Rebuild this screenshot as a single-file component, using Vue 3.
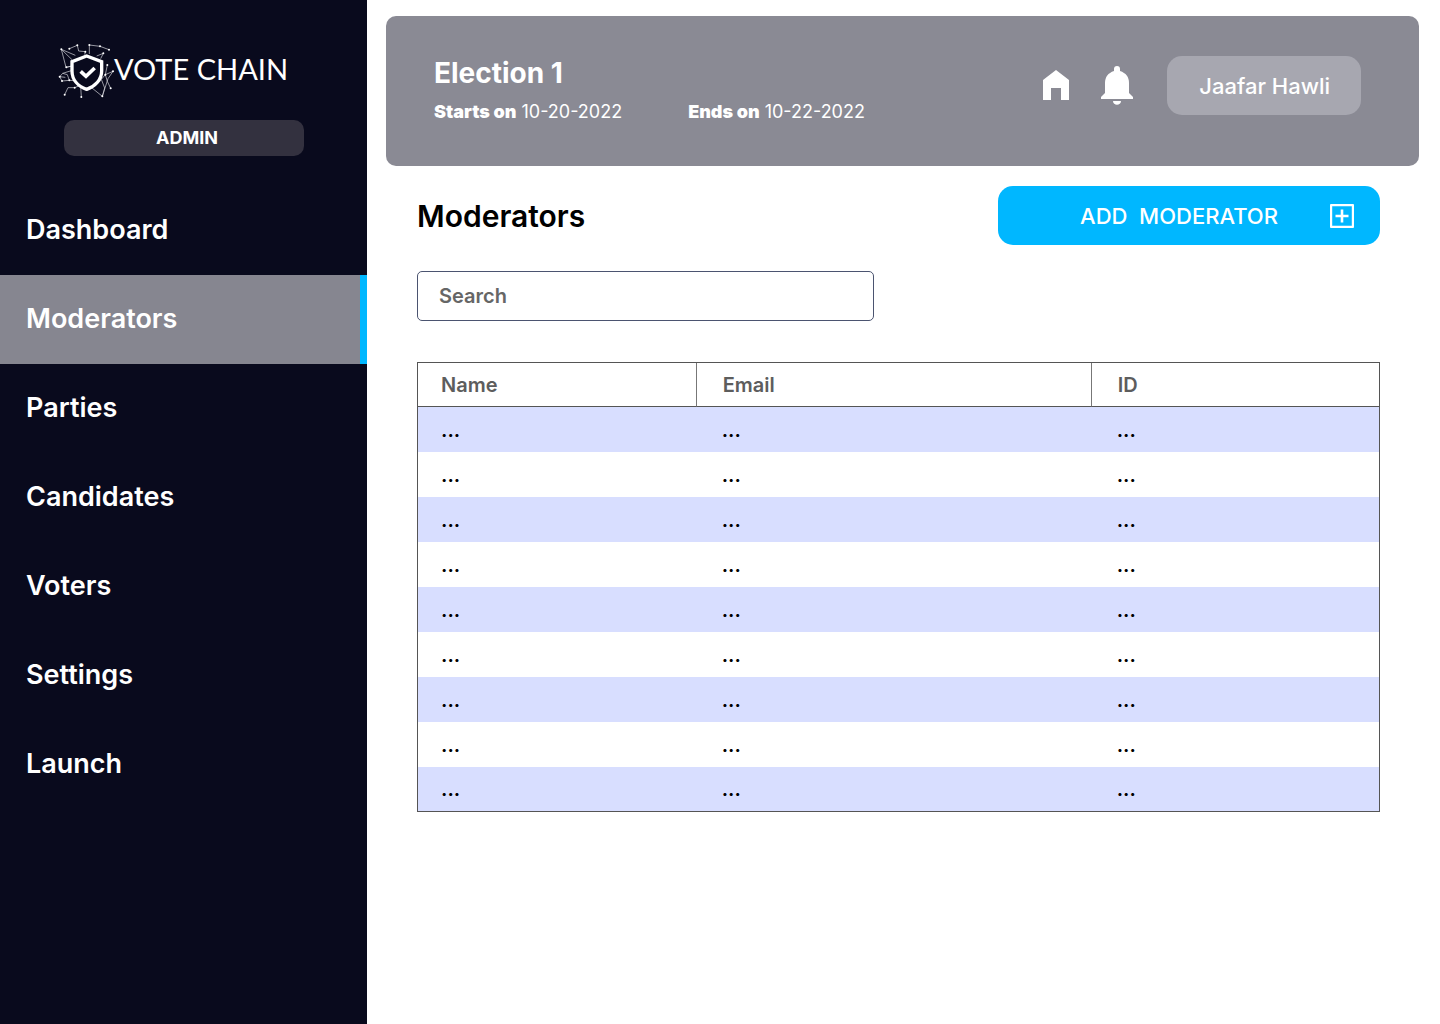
<script setup>
import { ref } from 'vue'

const links = ['Dashboard', 'Moderators', 'Parties', 'Candidates', 'Voters', 'Settings', 'Launch']
const active = ref('Moderators')
const search = ref('')
const moderators = Array.from({ length: 9 }, (_, i) => ({ key: i, name: '...', email: '...', id: '...' }))
const nodes = [
  [34, 40], [58, 38], [82, 28], [106, 47], [118, 27], [150, 31], [177, 41], [160, 52], [49, 94], [29, 122],
  [36, 135], [58, 133], [44, 176], [74, 155], [94, 183], [157, 181], [182, 157], [189, 106], [172, 87], [166, 116],
]
</script>

<template>
  <div class="app">
    <aside class="sidebar">
      <a href="#" class="brand">
        <svg class="brand-mark" viewBox="24 21 168 168" aria-hidden="true">
          <path d="M66 71 34 40 48 94 66 90M34 40 76 58M58 38 82 28 86 45 106 47 104 56M118 54 118 27 150 31 177 41M140 60 160 52 152 68M48 94 66 90M64 104 38 112 29 122 36 135 58 133 52 116 38 112M29 122 46 124M74 134 58 133M74 155 54 155 44 176M74 155 90 148M92 150 94 183M126 156 157 181 164 156 154 130M182 157 172 136 166 116 189 106 174 128 157 181M166 116 172 87M154 130 166 116" fill="none" stroke="#dcdce2" stroke-width="2" />
          <g fill="#fff">
            <circle v-for="p in nodes" :key="p.join()" :cx="p[0]" :cy="p[1]" r="3" />
          </g>
          <path d="M110 60 155 77V105C155 131 136 151 110 160 84 151 66 131 66 105V77Z" fill="#090a1d" stroke="#fff" stroke-width="10" />
          <path d="M92 106 108 121 134 96" fill="none" stroke="#fff" stroke-width="11" />
        </svg>
        <span class="brand-name">VOTE CHAIN</span>
      </a>
      <div class="role">ADMIN</div>
      <nav class="nav">
        <a v-for="link in links" :key="link" href="#" class="nav-link" :class="{ active: link === active }" @click.prevent="active = link">{{ link }}</a>
      </nav>
    </aside>

    <main class="main">
      <header class="banner">
        <div class="election">
          <h1 class="election-name">Election 1</h1>
          <div class="dates">
            <span><strong>Starts on</strong> 10-20-2022</span>
            <span><strong>Ends on</strong> 10-22-2022</span>
          </div>
        </div>
        <div class="tools">
          <button class="icon-button" type="button" aria-label="Home">
            <svg width="26" height="32" viewBox="0 0 26 32"><path d="M0 10 13 0 26 10V30H18V18H8V30H0Z" fill="#fff" /></svg>
          </button>
          <button class="icon-button" type="button" aria-label="Notifications">
            <svg width="32" height="39" viewBox="0 0 32 39"><path d="M13 5V3a3 3 0 0 1 6 0V5C25 7 28 11 28 17V27L32 31V33H0V31L4 27V17C4 11 7 7 13 5ZM12 35H20C20 40 12 40 12 35Z" fill="#fff" /></svg>
          </button>
          <button class="user" type="button">Jaafar Hawli</button>
        </div>
      </header>

      <section class="content">
        <div class="heading">
          <h2 class="title">Moderators</h2>
          <button class="add" type="button">
            <span class="add-label">ADD&nbsp; MODERATOR</span>
            <svg width="24" height="24" viewBox="0 0 24 24" fill="none" stroke="#fff"><rect x="1" y="1" width="22" height="22" rx="1" stroke-width="2.4" /><path d="M12 5.500V18.500M5.500 12H18.500" stroke-width="2.600" /></svg>
          </button>
        </div>
        <input v-model="search" class="search" type="search" placeholder="Search" aria-label="Search moderators" />
        <table class="table">
          <thead>
            <tr><th class="col-name">Name</th><th class="col-email">Email</th><th>ID</th></tr>
          </thead>
          <tbody>
            <tr v-for="m in moderators" :key="m.key"><td>{{ m.name }}</td><td>{{ m.email }}</td><td>{{ m.id }}</td></tr>
          </tbody>
        </table>
      </section>
    </main>
  </div>
</template>

<style>
body {
  margin: 0;
}
</style>

<style scoped>
* {
  box-sizing: border-box;
}
.app {
  display: flex;
  min-height: 100vh;
  background: #fff;
  font-family: Inter, sans-serif;
}
button {
  border: 0;
  padding: 0;
  background: none;
  color: #fff;
  font-family: inherit;
  cursor: pointer;
}
.sidebar {
  flex: 0 0 367px;
  background: #090a1d;
  color: #fff;
}
.brand {
  display: flex;
  align-items: center;
  height: 56px;
  margin: 43px 0 0 58px;
  color: #fff;
  text-decoration: none;
}
.brand-mark {
  flex: none;
  width: 56px;
  height: 56px;
}
.brand-name {
  font-family: Lato, sans-serif;
  font-size: 29px;
  font-weight: 400;
  line-height: 52px;
  padding-bottom: 4px;
  white-space: nowrap;
}
.role {
  width: 240px;
  margin: 21px 0 30px 64px;
  padding-left: 6px;
  border-radius: 10px;
  background: #33313f;
  font-size: 18px;
  font-weight: 700;
  line-height: 36px;
  text-align: center;
}
.nav-link {
  display: block;
  padding: 0 0 2px 26px;
  color: #fff;
  font-size: 27px;
  font-weight: 600;
  line-height: 87px;
  text-decoration: none;
}
.nav-link.active {
  border-right: 7px solid #00b7ff;
  background: #868690;
}
.main {
  flex: 1;
  min-width: 0;
  padding: 16px 21px 40px 19px;
}
.banner {
  display: flex;
  justify-content: space-between;
  align-items: flex-start;
  padding: 40px 58px 36px 48px;
  border-radius: 10px;
  background: #8a8a94;
  color: #fff;
}
.election-name {
  margin: 0 0 4px;
  font-size: 28px;
  font-weight: 700;
  line-height: 34px;
}
.dates {
  display: flex;
  gap: 66px;
  font-size: 18px;
  line-height: 36px;
}
.dates strong {
  font-weight: 900;
}
.tools {
  display: flex;
  align-items: center;
}
.icon-button {
  display: flex;
  margin-right: 32px;
}
.icon-button + .icon-button {
  margin-right: 34px;
}
.user {
  height: 59px;
  padding: 0 31px 0 32px;
  border-radius: 15px;
  background: #a7a7b0;
  font-size: 22px;
  font-weight: 500;
}
.content {
  padding: 20px 39px 0 31px;
}
.heading {
  display: flex;
  justify-content: space-between;
  align-items: center;
  margin-bottom: 26px;
}
.title {
  margin: 0;
  color: #000;
  font-size: 30px;
  font-weight: 600;
}
.add {
  display: flex;
  align-items: center;
  width: 382px;
  height: 59px;
  padding: 0 26px 0 30px;
  border-radius: 15px;
  background: #00b7ff;
  font-size: 22px;
  font-weight: 500;
}
.add-label {
  flex: 1;
}
.search {
  display: block;
  width: 457px;
  height: 50px;
  margin: 0 0 41px;
  padding: 0 21px;
  border: 1px solid #4b5470;
  border-radius: 5px;
  background: #fff;
  color: #000;
  font-family: inherit;
  font-size: 20px;
  font-weight: 600;
}
.search::placeholder {
  color: #666;
  opacity: 1;
}
.table {
  width: 100%;
  border: 1px solid #555;
  border-collapse: separate;
  border-spacing: 0;
  table-layout: fixed;
  text-align: left;
  font-size: 20px;
  font-weight: 600;
}
.table th,
.table td {
  height: 45px;
  padding: 0 26px;
}
.table th:first-child,
.table td:first-child {
  padding-left: 23px;
}
.table th {
  height: 44px;
  border-bottom: 1px solid #555;
  color: #5d5d5d;
  font-weight: 600;
}
.table th + th {
  border-left: 1px solid #777;
}
.table tbody tr:last-child td {
  height: 44px;
}
.col-name {
  width: 28.9%;
}
.col-email {
  width: 41.1%;
}
.table td {
  color: #000;
}
.table tbody tr:nth-child(odd) {
  background: #d8deff;
}
</style>
